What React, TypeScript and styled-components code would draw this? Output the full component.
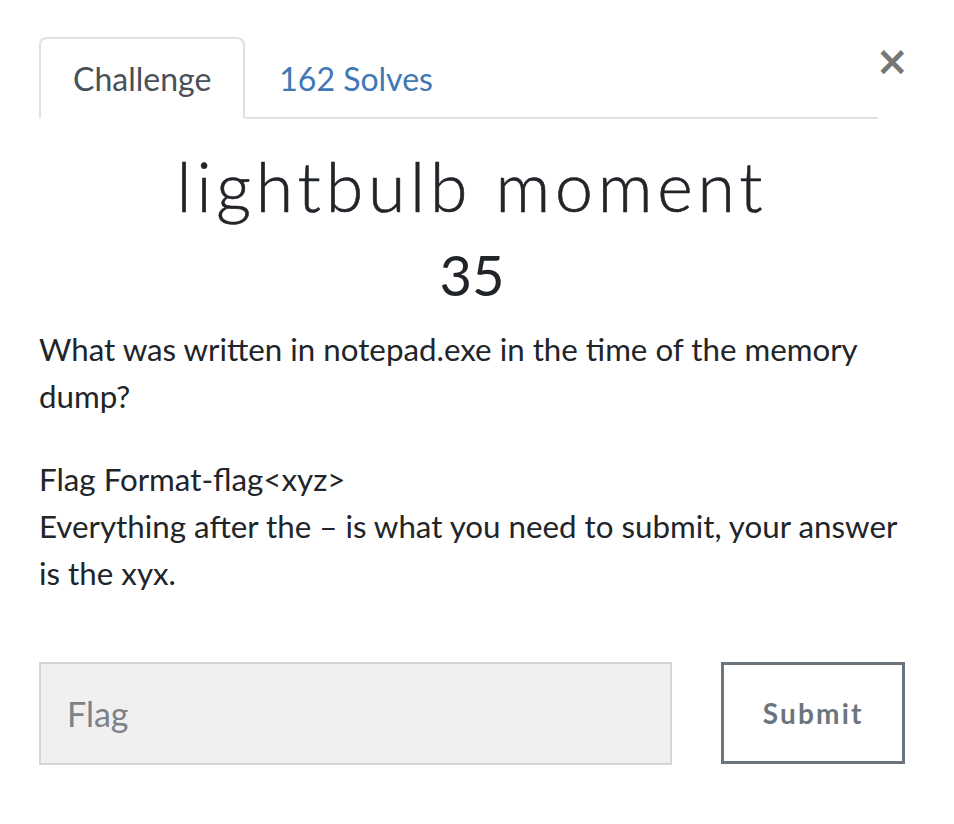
import React from "react";
import styled, { createGlobalStyle } from "styled-components";

const Global = createGlobalStyle`
  html, body { margin: 0; padding: 0; background: #fff; }
  body { font-family: Lato, "Noto Sans", sans-serif; color: #212529; }
  * { box-sizing: border-box; }
`;

const Modal = styled.div`
  position: relative;
  width: 954px;
  padding: 37px 49px 0 39px;
`;

const Close = styled.button`
  position: absolute;
  top: 41px;
  right: 45px;
  border: none;
  background: none;
  padding: 0;
  font-family: "DejaVu Sans", sans-serif;
  font-size: 40px;
  font-weight: 700;
  line-height: 1;
  color: #777;
  cursor: pointer;
`;

const Tabs = styled.div`
  display: flex;
  width: 839px;
  border-bottom: 2px solid #dee2e6;
`;

const Tab = styled.div<{ $active?: boolean }>`
  height: 82px;
  padding: 0 32px;
  display: flex;
  align-items: center;
  font-size: 32px;
  margin-bottom: -2px;
  border: 2px solid ${(p) => (p.$active ? "#dee2e6" : "transparent")};
  border-bottom-color: ${(p) => (p.$active ? "#fff" : "transparent")};
  border-radius: 8px 8px 0 0;
  color: ${(p) => (p.$active ? "#495057" : "#3f78b4")};
  background: ${(p) => (p.$active ? "#fff" : "transparent")};
`;

const Title = styled.h1`
  margin: 26px 0 0;
  text-align: center;
  font-family: Lato, sans-serif;
  font-weight: 300;
  font-size: 68px;
  letter-spacing: 4.8px;
  line-height: 1.2;
  color: #212529;
  -webkit-text-stroke: 0.6px #212529;
`;

const Points = styled.div`
  text-align: center;
  font-size: 56px;
  font-weight: 400;
  line-height: 1.2;
  margin-top: 14px;
`;

const Para = styled.p`
  margin: 0 0 36px;
  font-size: 31.3px;
  line-height: 47px;
  &:first-of-type { margin-top: 18px; }
`;

const Form = styled.form`
  display: flex;
  gap: 49px;
  margin-top: 65px;
`;

const Input = styled.input`
  width: 635px;
  height: 103px;
  background: #f0f0f0;
  border: 2px solid #d3d6d9;
  padding: 0 26px;
  font-family: Lato, sans-serif;
  font-size: 34px;
  color: #495057;
  outline: none;
  &::placeholder { color: #7c8289; }
`;

const Submit = styled.button`
  width: 184px;
  height: 102px;
  background: #fff;
  border: 3px solid #6c757d;
  font-family: Lato, sans-serif;
  font-weight: 700;
  font-size: 28px;
  letter-spacing: 2.2px;
  color: #6c757d;
`;

export default function App() {
  return (
    <>
      <Global />
      <Modal>
        <Close aria-label="Close">×</Close>
        <Tabs>
          <Tab $active>Challenge</Tab>
          <Tab>162 Solves</Tab>
        </Tabs>
        <Title>lightbulb moment</Title>
        <Points>35</Points>
        <Para>What was written in notepad.exe in the time of the memory dump?</Para>
        <Para>
          Flag Format-flag&lt;xyz&gt;
          <br />
          Everything after the – is what you need to submit, your answer is the xyx.
        </Para>
        <Form onSubmit={(e) => e.preventDefault()}>
          <Input placeholder="Flag" />
          <Submit type="submit">Submit</Submit>
        </Form>
      </Modal>
    </>
  );
}
